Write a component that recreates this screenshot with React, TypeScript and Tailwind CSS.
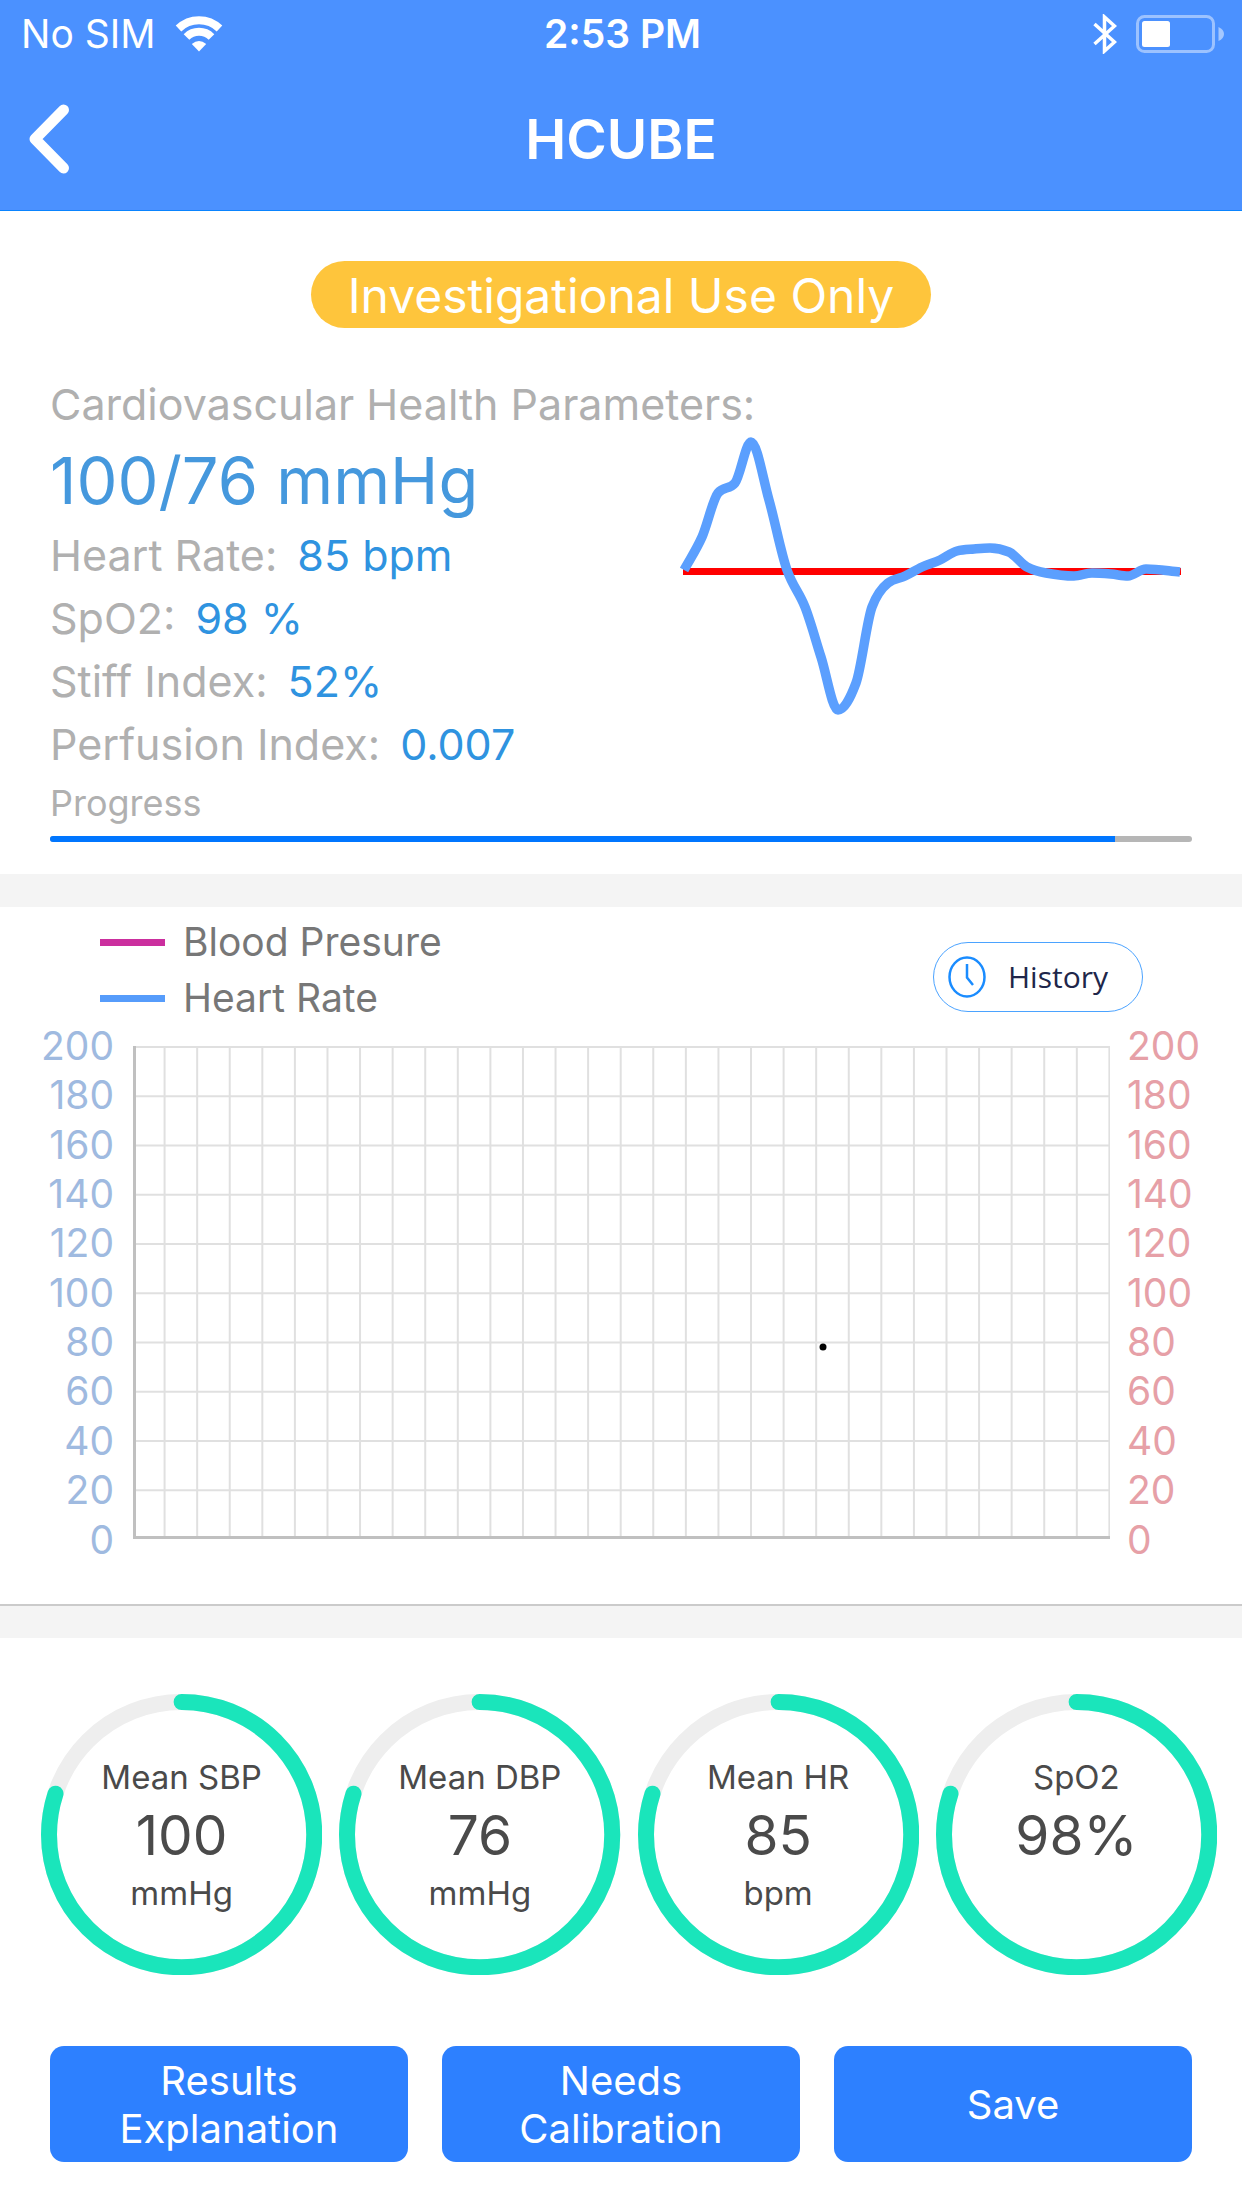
import React from "react";

type Point = [number, number];

const pulse: Point[] = [
  [24, 150], [42, 117], [58, 73], [75, 63], [91, 22], [109, 80], [127, 150],
  [145, 187], [161, 237], [178, 290], [196, 263], [212, 187], [228, 163],
  [245, 156], [262, 147], [280, 140], [297, 131], [314, 129], [330, 128],
  [349, 132], [367, 147], [386, 153], [414, 156], [432, 153], [451, 154],
  [468, 156], [486, 149], [520, 152],
];

// Flat tangents at local extremes keep the peaks from overshooting.
function smoothPath(points: Point[]): string {
  const slope = points.map((p, i) => {
    if (i === 0) return (points[1][1] - p[1]) / (points[1][0] - p[0]);
    if (i === points.length - 1) return (p[1] - points[i - 1][1]) / (p[0] - points[i - 1][0]);
    const a = (p[1] - points[i - 1][1]) / (p[0] - points[i - 1][0]);
    const b = (points[i + 1][1] - p[1]) / (points[i + 1][0] - p[0]);
    return a * b <= 0 ? 0 : Math.sign(a) * Math.sqrt(a * b);
  });
  let d = `M${points[0][0]} ${points[0][1]}`;
  for (let i = 1; i < points.length; i++) {
    const [x0, y0] = points[i - 1];
    const [x1, y1] = points[i];
    const h = (x1 - x0) / 3;
    d += ` C${x0 + h} ${y0 + h * slope[i - 1]} ${x1 - h} ${y1 - h * slope[i]} ${x1} ${y1}`;
  }
  return d;
}

const metrics = [
  { label: "Heart Rate:", value: "85 bpm" },
  { label: "SpO2:", value: "98 %" },
  { label: "Stiff Index:", value: "52%" },
  { label: "Perfusion Index:", value: "0.007" },
];

const rings = [
  { label: "Mean SBP", value: "100", unit: "mmHg" },
  { label: "Mean DBP", value: "76", unit: "mmHg" },
  { label: "Mean HR", value: "85", unit: "bpm" },
  { label: "SpO2", value: "98%", unit: "" },
];

const ticks = [200, 180, 160, 140, 120, 100, 80, 60, 40, 20, 0];

function StatusBar() {
  return (
    <div className="grid h-[68px] grid-cols-3 items-center pl-[21px] pr-[18px] text-[39px] leading-[48px]">
      <div className="flex items-center gap-[20px]">
        <span>No SIM</span>
        <svg className="h-[36px] w-[48px]" viewBox="0 0 48 36" fill="none" stroke="white" aria-label="Wi-Fi">
          <path d="M3.5 12.5 A29.5 29.5 0 0 1 44.5 12.5" strokeWidth="8" />
          <path d="M11.5 21 A17.8 17.8 0 0 1 36.5 21" strokeWidth="8" />
          <path d="M24 35.5 L16.8 28 Q24 21.8 31.2 28 Z" fill="white" stroke="none" />
        </svg>
      </div>
      <div className="text-center font-semibold">2:53 PM</div>
      <div className="flex items-center justify-end gap-[19px]">
        <svg className="h-[40px] w-[24px]" viewBox="0 0 24 40" fill="none" stroke="white" strokeWidth="3.5" aria-label="Bluetooth">
          <path d="M1.5 10 L21.5 28 L11.5 37 V3 L21.5 12 L1.5 30" />
        </svg>
        <svg className="h-[38px] w-[88px]" viewBox="0 0 88 38" aria-label="Battery">
          <rect x="1.5" y="1.5" width="76" height="35" rx="7" fill="none" stroke="#9cc2ff" strokeWidth="3" />
          <rect x="6" y="6" width="28" height="26" rx="2.5" fill="white" />
          <path d="M82.5 12 Q88 14.500 88 19 Q88 23.5 82.5 26 Z" fill="#a5c8ff" />
        </svg>
      </div>
    </div>
  );
}

function Header() {
  return (
    <header className="border-b border-[#0a84ff] bg-[#4b91ff] text-white">
      <StatusBar />
      <div className="grid h-[142px] grid-cols-[1fr_auto_1fr] items-center">
        <button type="button" aria-label="Back" className="ml-[28px] h-[72px] w-[42px]">
          <svg viewBox="0 0 42 72" fill="none" stroke="white" strokeWidth="11" strokeLinecap="round" strokeLinejoin="round">
            <path d="M35.5 7 L7 36 L35.5 65" />
          </svg>
        </button>
        <h1 className="text-[55px] font-semibold leading-[64px]">HCUBE</h1>
      </div>
    </header>
  );
}

function Summary() {
  return (
    <section className="px-[50px] pb-[32px] pt-[50px]">
      <div className="mx-auto flex h-[67px] w-fit items-center rounded-full bg-[#fec53c] px-[37px] pt-[2px] text-[48px] text-white">
        Investigational Use Only
      </div>
      <h2 className="mt-[46px] text-[43px] leading-[60px] text-[#b0b0b0]">Cardiovascular Health Parameters:</h2>
      <div className="flex items-start justify-between">
        <div className="pt-[8px]">
          <p className="text-[65px] leading-[78px] text-[#4598dd]">100/76 mmHg</p>
          <dl className="mt-[4px] text-[43px] leading-[63px]">
            {metrics.map((m) => (
              <div key={m.label} className="flex gap-[20px] whitespace-nowrap">
                <dt className="text-[#b0b0b0]">{m.label}</dt>
                <dd className="text-[#2f93e0]">{m.value}</dd>
              </div>
            ))}
          </dl>
        </div>
        <svg className="mr-[9px] mt-[2px] h-[280px] w-[503px]" viewBox="20 16 503 280" fill="none" aria-label="Pulse waveform">
          <path d="M23 151.5 H521" stroke="#ff0000" strokeWidth="7" />
          <path d={smoothPath(pulse)} stroke="#5b9ffe" strokeWidth="9.5" strokeLinejoin="round" />
        </svg>
      </div>
      <p id="progress-label" className="mt-[2px] text-[36px] leading-[50px] text-[#b0b0b0]">Progress</p>
      <div
        role="progressbar"
        aria-labelledby="progress-label"
        aria-valuenow={93}
        aria-valuemin={0}
        aria-valuemax={100}
        className="mt-[8px] h-[6px] overflow-hidden rounded-full bg-[#b6b6b6]"
      >
        <div className="h-full bg-[#0076ff]" style={{ width: "93.3%" }} />
      </div>
    </section>
  );
}

function Axis({ className }: { className: string }) {
  return (
    <ul className={`flex flex-col justify-between text-[39px] ${className}`}>
      {ticks.map((t) => (
        <li key={t} className="flex h-0 items-center">{t}</li>
      ))}
    </ul>
  );
}

function Trend() {
  const columns = Array.from({ length: 30 }, (_, i) => 32.58 * (i + 1));
  const rows = Array.from({ length: 10 }, (_, i) => 1 + 49.25 * i);
  return (
    <section className="border-b-2 border-[#cbcbcb] pb-[64px] pt-[7px]">
      <div className="flex items-start justify-between pl-[100px] pr-[99px]">
        <ul className="text-[39px] leading-[56px] text-[#777777]">
          <li className="flex items-center gap-[18px]">
            <span className="h-[7px] w-[65px] bg-[#cb2f9e]" />
            Blood Presure
          </li>
          <li className="flex items-center gap-[18px]">
            <span className="h-[7px] w-[65px] bg-[#569cfb]" />
            Heart Rate
          </li>
        </ul>
        <button
          type="button"
          className="mt-[28px] flex h-[70px] w-[210px] items-center gap-[22px] rounded-full border border-[#4ba3ff] pl-[14px] font-['Open_Sans',sans-serif] text-[30px] font-medium leading-[40px] text-[#20264a]"
        >
          <svg className="h-[42px] w-[38px]" viewBox="0 0 38 42" fill="none" stroke="#1a8cff">
            <ellipse cx="19" cy="21" rx="17.5" ry="19.5" strokeWidth="2.5" />
            <path d="M19 8 V21.5 L25 29" strokeWidth="2.5" />
          </svg>
          History
        </button>
      </div>
      <div className="mt-[20px] flex">
        <Axis className="w-[132px] items-end pr-[18px] text-[#9fbae0]" />
        <svg className="min-w-0 flex-1" viewBox="0 0 978 494" aria-label="Blood pressure and heart rate chart">
          <g stroke="#e0e0e0" strokeWidth="2">
            {columns.map((x) => (
              <line key={x} x1={x} x2={x} y1="0" y2="492" />
            ))}
            {rows.map((y) => (
              <line key={y} x1="2" x2="978" y1={y} y2={y} />
            ))}
          </g>
          <path d="M2.5 0 V491.5 H978" fill="none" stroke="#c0c0c0" strokeWidth="3" />
          <circle cx="691" cy="301" r="3.5" fill="black" />
        </svg>
        <Axis className="w-[132px] items-start pl-[17px] text-[#e6a0a7]" />
      </div>
    </section>
  );
}

function Ring({ label, value, unit }: { label: string; value: string; unit: string }) {
  return (
    <div className="grid place-items-center text-[#4a4a4a]">
      <svg className="col-start-1 row-start-1 w-full" viewBox="0 0 281 281" fill="none" strokeWidth="16" aria-hidden="true">
        <circle cx="140.5" cy="140.5" r="132.5" stroke="#eeeeee" />
        <circle
          cx="140.5"
          cy="140.5"
          r="132.5"
          stroke="#1ae5bb"
          strokeLinecap="round"
          pathLength="100"
          strokeDasharray="80 100"
          transform="rotate(-90 140.5 140.5)"
        />
      </svg>
      <div className="col-start-1 row-start-1 grid grid-rows-3 text-center text-[33px] leading-[58px]">
        <span>{label}</span>
        <span className="text-[55px]">{value}</span>
        <span className="h-[58px]">{unit}</span>
      </div>
    </div>
  );
}

export default function App() {
  return (
    <div className="min-h-screen bg-white font-['Inter',sans-serif]">
      <Header />
      <main>
        <Summary />
        <div className="h-[33px] bg-[#f4f4f4]" />
        <Trend />
        <div className="h-[32px] bg-[#f4f4f4]" />
        <section className="grid grid-cols-4 gap-[17px] pl-[41px] pr-[25px] pt-[56px]">
          {rings.map((r) => (
            <Ring key={r.label} {...r} />
          ))}
        </section>
        <div className="mt-[71px] grid grid-cols-3 gap-[34px] px-[50px] pb-[44px]">
          {["Results Explanation", "Needs Calibration", "Save"].map((name) => (
            <button
              key={name}
              type="button"
              className="h-[116px] rounded-[14px] bg-[#2d80ff] px-[60px] pt-[2px] text-[40px] leading-[48px] text-white"
            >
              {name}
            </button>
          ))}
        </div>
      </main>
    </div>
  );
}
